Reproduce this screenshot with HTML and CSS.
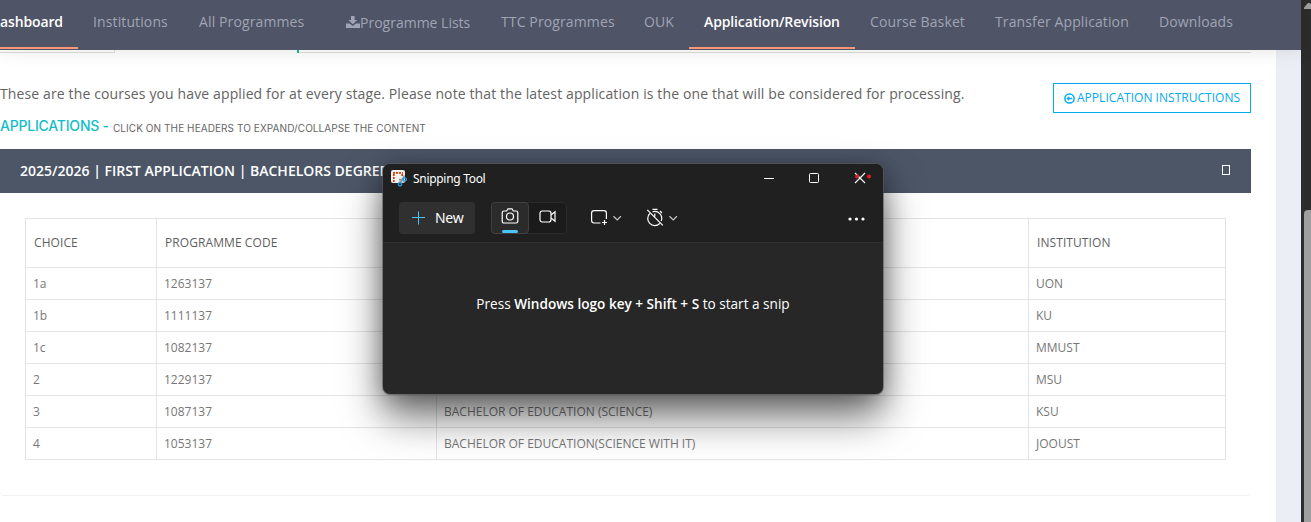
FILE: index.html
```html
<!DOCTYPE html>
<html lang="en">
<head>
<meta charset="utf-8">
<title>Application/Revision</title>
<link rel="stylesheet" href="styles.css">
</head>
<body>
<div class="page">
  <div class="site">
    <nav class="nav">
      <a class="nav-item active first"><span>ashboard</span></a>
      <a class="nav-item"><span>Institutions</span></a>
      <a class="nav-item"><span>All Programmes</span></a>
      <a class="nav-item lists"><svg width="14" height="12" viewBox="0 0 14 12"><path fill="currentColor" d="M5 0h3.600v4h2.700L6.800 8.300 2.300 4H5zM0 7.600h3.600l3.200 2.500L10 7.600h4V12H0z"/></svg><span>Programme Lists</span></a>
      <a class="nav-item"><span>TTC Programmes</span></a>
      <a class="nav-item"><span>OUK</span></a>
      <a class="nav-item active"><span>Application/Revision</span></a>
      <a class="nav-item"><span>Course Basket</span></a>
      <a class="nav-item"><span>Transfer Application</span></a>
      <a class="nav-item"><span>Downloads</span></a>
    </nav>
    <main class="content">
      <div class="tabs"><div class="tab"></div><div class="tab-gap"></div><div class="tab-rest"></div></div>
      <div class="intro">
        <div>
          <p class="lead">These are the courses you have applied for at every stage. Please note that the latest application is the one that will be considered for processing.</p>
          <h4 class="heading"><span class="heading-main">APPLICATIONS -</span><span class="heading-sub">CLICK ON THE HEADERS TO EXPAND/COLLAPSE THE CONTENT</span></h4>
        </div>
        <a class="instructions"><svg width="11" height="11" viewBox="0 0 11 11"><circle cx="5.500" cy="5.500" r="4.600" fill="none" stroke="currentColor" stroke-width="1.500"/><path fill="currentColor" d="M2.400 5.500l2.800-2.500v1.800h3v1.400h-3v1.800z"/></svg><span>APPLICATION INSTRUCTIONS</span></a>
      </div>
      <section class="card">
        <header class="card-head"><span class="card-title">2025/2026 | FIRST APPLICATION | BACHELORS DEGREE</span><i class="missing"></i></header>
        <div class="card-body">
          <table>
            <colgroup><col class="c1"><col class="c2"><col class="c3"><col class="c4"></colgroup>
            <thead><tr><th>CHOICE</th><th>PROGRAMME CODE</th><th></th><th>INSTITUTION</th></tr></thead>
            <tbody>
              <tr><td>1a</td><td>1263137</td><td></td><td>UON</td></tr>
              <tr><td>1b</td><td>1111137</td><td></td><td>KU</td></tr>
              <tr><td>1c</td><td>1082137</td><td></td><td>MMUST</td></tr>
              <tr><td>2</td><td>1229137</td><td></td><td>MSU</td></tr>
              <tr><td>3</td><td>1087137</td><td>BACHELOR OF EDUCATION (SCIENCE)</td><td>KSU</td></tr>
              <tr><td>4</td><td>1053137</td><td>BACHELOR OF EDUCATION(SCIENCE WITH IT)</td><td>JOOUST</td></tr>
            </tbody>
          </table>
        </div>
      </section>
    </main>
  </div>
  <div class="scrollbar"><svg width="7" height="6" viewBox="0 0 7 6"><path fill="#9f9f9f" d="M0 6V4.500L3.500.500Q5 -.8 6.500.500L7 1v5z"/></svg><div class="thumb"></div></div>
</div>

<div class="window">
  <div class="titlebar">
    <svg class="app-icon" width="16" height="17" viewBox="0 0 16 17"><rect width="14" height="13" rx="2" fill="#f3f1ef"/><path d="M9 9h4v4H7z" fill="#c4c8cc"/><path d="M2 2.800h10M2.800 4v8M11.200 4v3" fill="none" stroke="#d83b01" stroke-width="1.700" stroke-dasharray="2 1"/><path d="M13.500 5.500L9 13M8 9.500h4" stroke="#8e989f" stroke-width="1.500"/><circle cx="13.800" cy="9.500" r="1.600" fill="none" stroke="#2196db" stroke-width="1.400"/><circle cx="9" cy="14.300" r="1.700" fill="none" stroke="#2196db" stroke-width="1.400"/></svg>
    <span class="app-name">Snipping Tool</span>
    <svg class="controls" width="120" height="20" viewBox="0 0 120 20" fill="none" stroke="#fff"><path d="M10 10.500h10"/><rect x="55.500" y="5.500" width="9" height="9" rx="1"/><path d="M101 5l10 10M111 5l-10 10" stroke-width="1.100"/><circle cx="103" cy="8.500" r="1.900" fill="#e81b23" stroke="none"/><circle cx="115" cy="8.500" r="2" fill="#e81b23" stroke="none"/></svg>
  </div>
  <div class="toolbar">
    <button class="new"><svg width="14" height="14" viewBox="0 0 14 14"><path d="M7.500 .5v13M1 6.500h13" stroke="#4cc2ff" stroke-width="1"/></svg><span>New</span></button>
    <div class="modes">
      <div class="mode selected"><svg width="18" height="16" viewBox="0 0 18 16" fill="none" stroke="#fff" stroke-width="1.200"><path d="M3 3h2.700L7 .8h4L12.300 3H15q1.800 0 1.800 1.800v8.400q0 1.800-1.800 1.800H3q-1.800 0-1.800-1.800V4.800Q1.200 3 3 3z"/><circle cx="9" cy="8.500" r="3.500"/></svg><i class="indicator"></i></div>
      <div class="mode video"><svg width="18" height="14" viewBox="0 0 18 14" fill="none" stroke="#fff" stroke-width="1.200"><rect x="1" y="1" width="11" height="11" rx="2.200"/><path d="M12 5l4-3.200v9.400l-4-3.200"/></svg></div>
    </div>
    <svg class="shape" width="32" height="20" viewBox="0 0 32 20" fill="none" stroke="#fff" stroke-width="1.200"><path d="M10.500 15H4q-2.400 0-2.400-2.400V5Q1.600 2.600 4 2.600h10q2.400 0 2.400 2.400v6M14.500 12v5M12 14.500h5"/><path stroke="#c8c8c8" d="M23.500 8.300l3.700 3.600 3.700-3.600"/></svg>
    <svg class="timer" width="32" height="20" viewBox="0 0 32 20" fill="none" stroke="#fff" stroke-width="1.200"><path d="M3.800 5.500A7 7 0 1 0 13.700 15.500M6.500 3.800A7 7 0 0 1 15.200 13M6.500 1.300h5M14 3l2 2M8.800 5.500v3M1.300 1.800l15.500 15.500"/><path stroke="#c8c8c8" d="M23.500 8.300l3.700 3.600 3.700-3.600"/></svg>
    <svg class="more" width="17" height="4" viewBox="0 0 17 4" fill="#fff"><circle cx="2" cy="2" r="1.600"/><circle cx="8.500" cy="2" r="1.600"/><circle cx="15" cy="2" r="1.600"/></svg>
  </div>
  <div class="hint"><span>Press </span><b>Windows logo key + Shift + S</b><span> to start a snip</span></div>
</div>
</body>
</html>
```
FILE: styles.css
```css
* { box-sizing: border-box; }
body { margin: 0; overflow: hidden; background: #fff; font: 14px/20px "Open Sans", sans-serif; color: #636363; }
.page { display: flex; width: 1311px; height: 522px; }
.site { width: 1301px; background: #ebeff5; }
.nav { position: relative; display: grid; grid-template-columns: 78px 106px 135px 167px 143px 60px 166px 125px 164px 104px; height: 50px; background: #4f5467; box-shadow: 0 1px 18px rgba(0,0,0,.1); white-space: nowrap; }
.nav-item { display: flex; align-items: flex-start; height: 49px; padding: 12px 0 0 15px; color: #a0a4b4; font-weight: 500; letter-spacing: .12px; border-bottom: 2px solid transparent; }
.nav-item.active { color: #fff; font-weight: 600; letter-spacing: -.13px; border-bottom-color: #fb9678; }
.nav-item.first { padding-left: 0; }
.nav-item.lists { padding: 13px 0 0 27px; font-weight: 400; letter-spacing: 0; }
.nav-item.lists svg { margin-top: 3px; }
.content { width: 1276px; height: 472px; background: #fff; }
.tabs { position: relative; display: flex; height: 3px; }
.tab { width: 115px; border: solid #d5d5d1; border-width: 0 1px 1px 0; }
.tab-gap { width: 182px; }
.tab-rest { width: 954px; background: linear-gradient(#d5d5d1,#d5d5d1) 0 100% / 100% 1px no-repeat; border-left: 2px solid #00b894; }
.intro { display: flex; justify-content: space-between; width: 1251px; height: 96px; padding-top: 30px; }
.lead { margin: 1px 0 0; letter-spacing: .124px; white-space: nowrap; }
.heading { display: flex; align-items: baseline; gap: 4px; margin: 12px 0 0; font: 500 14px/20px Inter, sans-serif; white-space: nowrap; }
.heading-main { color: #12bdc9; letter-spacing: -.21px; }
.heading-sub { position: relative; top: 1px; font-size: 10px; font-weight: 400; color: #666; letter-spacing: .08px; }
.instructions { display: flex; align-items: center; gap: 2px; width: 198px; height: 30px; padding-left: 10px; border: 1px solid #03a9f3; color: #03a9f3; font-size: 12px; letter-spacing: .03px; white-space: nowrap; }
.card { width: 1251px; height: 347px; border: solid #f2f2f2; border-width: 0 0 1px; border-radius: 0 0 4px 4px; }
.card-head { display: flex; align-items: center; justify-content: space-between; height: 44px; padding: 0 21px 0 20px; background: #4c5667; color: #fff; font-weight: 600; }
.missing { width: 8px; height: 10px; margin-bottom: 2px; border: 1px solid #fff; }
.card-body { padding: 25px; }
table { width: 1201px; table-layout: fixed; border-collapse: collapse; font-size: 12px; line-height: 18px; }
.c1 { width: 131px; } .c2 { width: 280px; } .c3 { width: 592px; } .c4 { width: 197px; }
th, td { padding: 0 7px; border: 1px solid #e1e5e8; text-align: left; color: #777; white-space: nowrap; }
th { height: 49px; font-weight: 400; color: #5f5f5f; padding-left: 8px; letter-spacing: .08px; }
td { height: 32px; }
.scrollbar { display: flex; flex-direction: column; align-items: flex-end; justify-content: space-between; width: 10px; padding-top: 3px; background: #2c2c2c; }
.thumb { width: 7px; height: 312px; background: #9f9f9f; border-top-left-radius: 4px; }
.window { position: absolute; left: 383px; top: 164px; width: 500px; height: 230px; border-radius: 7px; background: #272727; color: #fff; box-shadow: 0 0 0 1px rgba(90,90,90,.6), 0 22px 40px rgba(0,0,0,.58), 0 2px 22px rgba(0,0,0,.25); }
.titlebar { display: flex; align-items: flex-start; height: 32px; padding-left: 8px; background: #202020; border-radius: 7px 7px 0 0; }
.app-icon { margin-top: 6px; }
.app-name { margin: 5px 0 0 6px; font: 12px/20px "Noto Sans", sans-serif; letter-spacing: -.3px; }
.controls { margin: 4px 9px 0 auto; }
.toolbar { display: flex; align-items: center; height: 47px; padding: 0 18px 3px 16px; background: #202020; border-bottom: 1px solid #303030; }
.new { display: flex; align-items: center; gap: 10px; width: 76px; height: 32px; padding: 0 0 0 12px; border: 0; border-radius: 4px; background: #303030; color: #fff; font: 14px "Noto Sans", sans-serif; letter-spacing: -.3px; }
.modes { display: flex; width: 76px; height: 32px; margin-left: 16px; border: 1px solid #2b2b2b; border-radius: 4px; background: #1b1b1b; }
.mode { display: flex; align-items: center; justify-content: center; width: 37px; height: 30px; }
.mode.video { padding: 0 0 1px 1px; }
.mode.selected { flex-direction: column; justify-content: space-between; width: 38px; height: 32px; margin: -1px 0 0 -1px; padding-top: 5px; background: #2b2b2b; border: 1px solid #404040; border-radius: 4px; }
.indicator { width: 16px; height: 3px; border-radius: 2px; background: #4cc2ff; }
.shape { margin-left: 23px; }
.timer { margin-left: 24px; }
.more { margin: 3px 0 0 auto; }
.hint { height: 122px; display: flex; align-items: center; justify-content: center; white-space: pre; font-size: 13.6px; }
.hint b { font-weight: 600; }
```
